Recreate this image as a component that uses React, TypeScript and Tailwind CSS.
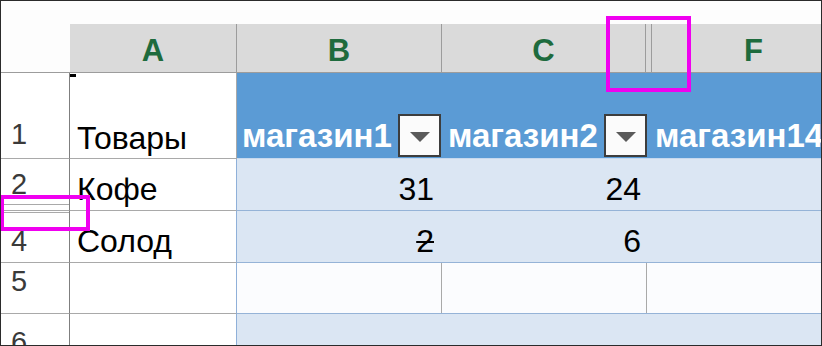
import React from 'react';

const HDR_LINE = 'border-[#9c9c9c]';
const GRID_LINE = 'border-[#a9a9a9]';
const TABLE_LINE = 'border-[#95b3d7]';

const RowNum: React.FC<{ n: string; pad: string; extra?: string }> = ({ n, pad, extra = '' }) => (
  <div
    className={`flex w-[69px] shrink-0 items-end border-r border-b border-r-[#7f7f7f] ${GRID_LINE} pl-[10px] text-[29px] leading-none text-[#3a3a3a] ${pad} ${extra}`}
  >
    <span>{n}</span>
  </div>
);

const Dropdown = () => (
  <div className="flex h-[43px] w-[43px] shrink-0 items-center justify-center border-2 border-[#3d3d3d] bg-[#fbfbfb] pt-[3px]">
    <svg width="20" height="10" viewBox="0 0 20 10">
      <polygon points="0,0 20,0 10,10" fill="#5a5a5a" />
    </svg>
  </div>
);

export default function App() {
  return (
    <div className="relative flex h-[346px] w-[822px] flex-col overflow-hidden border border-[#2b2b2b] bg-white font-['Liberation_Sans',Arial,sans-serif] text-black">
      <div className="h-[23px] shrink-0 bg-[#fdfdfd]" />

      {/* column letters */}
      <div className={`flex h-[49px] shrink-0 border-b ${HDR_LINE} text-[31px] font-bold leading-none text-[#1e6b3d]`}>
        <div className="w-[69px] shrink-0 bg-[#fdfdfd]" />
        <div className={`flex w-[167px] shrink-0 items-center justify-center border-r ${HDR_LINE} bg-[#dadada] pt-[4px]`}>A</div>
        <div className={`flex w-[205px] shrink-0 items-center justify-center border-r ${HDR_LINE} bg-[#dadada] pt-[4px]`}>B</div>
        <div className={`flex w-[204px] shrink-0 items-center justify-center border-r ${HDR_LINE} bg-[#dadada] pt-[4px]`}>C</div>
        <div className={`w-[6px] shrink-0 border-r ${HDR_LINE} bg-[#dadada]`} />
        <div className="flex flex-1 items-center bg-[#dadada] pl-[92px] pt-[4px]">F</div>
      </div>

      {/* row 1: table header */}
      <div className="flex h-[86px] shrink-0">
        <RowNum n="1" pad="pb-[9px]" />
        <div className={`flex w-[167px] shrink-0 flex-col justify-between border-r border-b ${GRID_LINE} pb-[4px] text-[32px] leading-none`}>
          <span className="mt-[1px] h-[3px] w-[6px] bg-black" />
          <span className="pl-[7px]">Товары</span>
        </div>
        <div className="flex flex-1 border-b border-[#c7d9ee] bg-[#5b9bd5] text-[33px] font-bold leading-none text-white">
          <div className="flex w-[205px] shrink-0 items-end justify-between pb-[1px] pl-[5px] pr-[1px]">
            <span className="pb-[5px]">магазин1</span>
            <Dropdown />
          </div>
          <div className="flex w-[205px] shrink-0 items-end justify-between pb-[1px] pl-[6px]">
            <span className="pb-[5px]">магазин2</span>
            <Dropdown />
          </div>
          <div className="flex flex-1 items-end overflow-hidden whitespace-nowrap pb-[6px] pl-[8px]">магазин14</div>
        </div>
      </div>

      {/* row 2 */}
      <div className="flex h-[52px] shrink-0 text-[32px] leading-none">
        <RowNum n="2" pad="pb-[11px]" extra="shadow-[inset_0_-5px_0_#ffffff,inset_0_-6px_0_#a9a9a9]" />
        <div className={`flex w-[167px] shrink-0 items-end border-r border-b border-r-[#8fb0d9] ${GRID_LINE} pb-[5px] pl-[7px]`}>Кофе</div>
        <div className={`flex flex-1 border-b ${TABLE_LINE} bg-[#dbe6f3]`}>
          <div className="flex w-[205px] shrink-0 items-end justify-end pb-[5px] pr-[8px]">31</div>
          <div className="flex w-[205px] shrink-0 items-end justify-end pb-[5px] pr-[6px]">24</div>
          <div className="flex-1" />
        </div>
      </div>

      {/* row 4 (row 3 hidden) */}
      <div className="flex h-[52px] shrink-0 text-[32px] leading-none">
        <RowNum n="4" pad="pb-[6px]" extra="shadow-[inset_0_1px_0_#ffffff,inset_0_2px_0_#a9a9a9]" />
        <div className={`flex w-[167px] shrink-0 items-end border-r border-b border-r-[#8fb0d9] ${GRID_LINE} pb-[5px] pl-[7px]`}>Солод</div>
        <div className={`flex flex-1 border-b ${TABLE_LINE} bg-[#dbe6f3]`}>
          <div className="flex w-[205px] shrink-0 items-end justify-end pb-[5px] pr-[8px]">
            <span className="line-through decoration-2">2</span>
          </div>
          <div className="flex w-[205px] shrink-0 items-end justify-end pb-[5px] pr-[6px]">6</div>
          <div className="flex-1" />
        </div>
      </div>

      {/* row 5 */}
      <div className="flex h-[51px] shrink-0">
        <RowNum n="5" pad="pb-[17px]" />
        <div className={`w-[167px] shrink-0 border-r border-b border-r-[#8fb0d9] ${GRID_LINE}`} />
        <div className={`flex flex-1 border-b ${TABLE_LINE} bg-[#fbfcfe]`}>
          <div className={`w-[205px] shrink-0 border-r ${GRID_LINE}`} />
          <div className={`w-[205px] shrink-0 border-r ${GRID_LINE}`} />
          <div className="flex-1" />
        </div>
      </div>

      {/* row 6 */}
      <div className="flex flex-1">
        <div className="flex w-[69px] shrink-0 items-start border-r border-[#7f7f7f] pl-[10px] pt-[14px] text-[29px] leading-none text-[#3a3a3a]">6</div>
        <div className="w-[167px] shrink-0 border-r border-[#8fb0d9]" />
        <div className="flex-1 bg-[#dbe6f3]" />
      </div>

      {/* annotation boxes */}
      <div className="pointer-events-none absolute left-[-1px] top-[194px] h-[36px] w-[90px] border-4 border-[#f000f0]" />
      <div className="pointer-events-none absolute left-[605px] top-[15px] h-[76px] w-[85px] border-4 border-[#f000f0]" />
    </div>
  );
}
